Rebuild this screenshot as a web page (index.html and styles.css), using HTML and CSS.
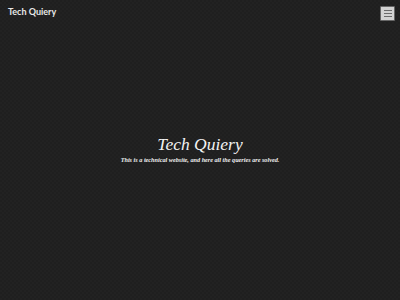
FILE: index.html
```html
<!DOCTYPE html>
<html lang="en">
<head>
<meta charset="utf-8">
<title>Tech Quiery</title>
<link rel="stylesheet" href="styles.css">
</head>
<body>
<header class="topbar">
  <span class="brand">Tech Quiery</span>
  <button class="menu-btn" aria-label="Menu">
    <span class="bar"></span><span class="bar"></span><span class="bar"></span>
  </button>
</header>
<main class="hero">
  <h1 class="hero-title">Tech Quiery</h1>
  <p class="hero-sub">This is a technical website, and here all the queries are solved.</p>
</main>
</body>
</html>
```
FILE: styles.css
```css
html, body {
  margin: 0;
  padding: 0;
  height: 100%;
}
body {
  background-color: #1f1f1f;
  background-image:
    linear-gradient(45deg, #222 25%, transparent 25%, transparent 75%, #222 75%),
    linear-gradient(45deg, #222 25%, transparent 25%, transparent 75%, #222 75%);
  background-size: 4px 4px;
  background-position: 0 0, 2px 2px;
  font-family: Lato, "Liberation Sans", sans-serif;
  color: #e6e6e6;
  display: flex;
  flex-direction: column;
}
.topbar {
  display: flex;
  justify-content: space-between;
  align-items: flex-start;
  padding: 5px 5px 0 8px;
}
.brand {
  font-size: 9px;
  font-weight: 700;
  line-height: 12px;
  color: #e8e8e8;
  margin-top: 1px;
}
.menu-btn {
  width: 15px;
  height: 15px;
  padding: 0;
  margin: 1px 0 0 0;
  background: #d2d2d2;
  border: 1px solid #666;
  border-radius: 1px;
  display: flex;
  flex-direction: column;
  justify-content: center;
  align-items: center;
  gap: 2px;
}
.bar {
  display: block;
  width: 8px;
  height: 1px;
  background: #6a6a6a;
}
.hero {
  flex: 1;
  display: flex;
  flex-direction: column;
  align-items: center;
  padding-top: 113px;
}
.hero-title {
  margin: 0;
  font-family: "Liberation Serif", serif;
  font-style: italic;
  font-weight: normal;
  font-size: 17.5px;
  line-height: 20px;
  color: #f2f2f2;
}
.hero-sub {
  margin: 2px 0 0 0;
  font-family: "Liberation Serif", serif;
  font-style: italic;
  font-weight: bold;
  font-size: 6.2px;
  line-height: 8px;
  color: #f0f0f0;
}
```
